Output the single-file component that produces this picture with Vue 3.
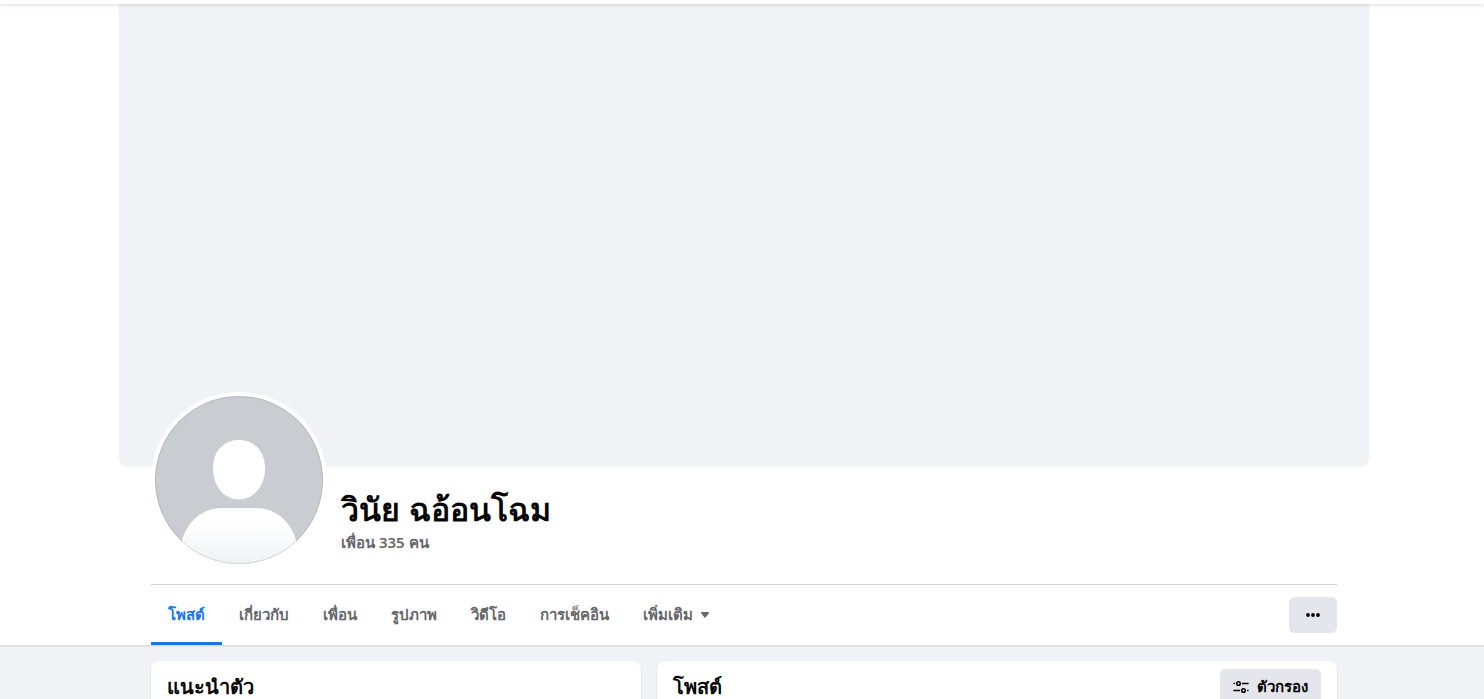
<script setup>
const tabs = ['โพสต์', 'เกี่ยวกับ', 'เพื่อน', 'รูปภาพ', 'วิดีโอ', 'การเช็คอิน']
</script>

<template>
  <div class="page">
    <div class="topbar"></div>
    <header class="profile">
      <div class="cover"></div>
      <div class="content">
        <div class="identity">
          <svg class="avatar" viewBox="0 0 176 176" role="img" aria-label="วินัย ฉอ้อนโฉม">
            <defs>
              <linearGradient id="shoulders" x1="0" y1="0" x2="0" y2="1">
                <stop offset="0.3" stop-color="#fff" />
                <stop offset="1" stop-color="#eff1f4" />
              </linearGradient>
              <clipPath id="disc"><circle cx="88" cy="88" r="84" /></clipPath>
            </defs>
            <circle cx="88" cy="88" r="88" fill="#fff" />
            <g clip-path="url(#disc)">
              <rect width="176" height="176" fill="#c9ccd1" />
              <path d="M88 48C104 48 114 60 114 76C114 94 103 107.500 88 107.500S62 94 62 76C62 60 72 48 88 48Z" fill="#fff" />
              <path d="M30 172V154C33 132 50 116 71 116H105C126 116 143 132 146 154V172Z" fill="url(#shoulders)" />
            </g>
            <circle cx="88" cy="88" r="83.500" fill="none" stroke="#000" stroke-opacity="0.1" />
          </svg>
          <div class="names">
            <h1>วินัย ฉอ้อนโฉม</h1>
            <a class="friends" href="#">เพื่อน 335 คน</a>
          </div>
        </div>
        <div class="navbar">
          <nav class="tabs">
            <a v-for="(tab, i) in tabs" :key="tab" href="#" class="tab" :class="{ active: i === 0 }">{{ tab }}</a>
            <button class="tab" type="button">
              เพิ่มเติม
              <svg class="caret" viewBox="0 0 8 6" aria-hidden="true"><path d="M0.800 0H7.200C8 0 8.200 0.800 7.700 1.400L4.700 5.300C4.300 5.900 3.700 5.900 3.300 5.300L0.300 1.400C-0.200 0.800 0 0 0.800 0Z" fill="currentColor" /></svg>
            </button>
          </nav>
          <button class="more" type="button" aria-label="เพิ่มเติม">
            <svg viewBox="0 0 16 16" aria-hidden="true"><g fill="#050505"><circle cx="3" cy="8" r="1.900" /><circle cx="8" cy="8" r="1.900" /><circle cx="13" cy="8" r="1.900" /></g></svg>
          </button>
        </div>
      </div>
    </header>
    <main class="content columns">
      <section class="card intro"><h2>แนะนำตัว</h2></section>
      <section class="card posts">
        <h2>โพสต์</h2>
        <button class="filter" type="button">
          <svg viewBox="0 0 16 16" aria-hidden="true">
            <g fill="none" stroke="#050505" stroke-width="1.500" stroke-linecap="round">
              <circle cx="5.500" cy="4.500" r="1.800" /><path d="M9.500 4.500H15M1 4.500H1.300" />
              <circle cx="10.500" cy="11.500" r="1.800" /><path d="M1 11.500H6.500M14.700 11.500H15" />
            </g>
          </svg>
          ตัวกรอง
        </button>
      </section>
    </main>
  </div>
</template>

<style>
body {
  margin: 0;
  background: #f0f2f5;
}
</style>

<style scoped>
.page {
  height: 100vh;
  overflow: hidden;
  font-family: "Liberation Sans", sans-serif;
  color: #050505;
  background: #f0f2f5;
}
.topbar {
  position: relative;
  height: 4px;
  background: #fff;
  box-shadow: 0 1px 4px rgba(0, 0, 0, 0.15);
}
.profile {
  padding-left: 4px;
  background: #fff;
  box-shadow: 0 1px 2px rgba(0, 0, 0, 0.15);
}
.cover {
  max-width: 1250px;
  height: 463px;
  margin: 0 auto;
  border-radius: 0 0 8px 8px;
  background: #f0f2f5;
}
.content {
  max-width: 1186px;
  margin: 0 auto;
}
.identity {
  display: flex;
  align-items: flex-end;
  gap: 14px;
  margin-top: -75px;
  padding-bottom: 16px;
  border-bottom: 1px solid #ced0d4;
}
.avatar {
  position: relative;
  flex: none;
  width: 176px;
  height: 176px;
}
.names {
  display: flex;
  flex-direction: column;
  padding-bottom: 14px;
}
h1 {
  margin: 0;
  font-size: 32px;
  line-height: 40px;
  color: #050505;
}
.friends {
  font-family: "Noto Sans", sans-serif;
  font-size: 15px;
  font-weight: 600;
  line-height: 24px;
  color: #65676b;
  text-decoration: none;
}
.navbar {
  display: flex;
  align-items: center;
  justify-content: space-between;
}
.tabs {
  display: flex;
}
.tab {
  display: flex;
  align-items: center;
  gap: 8px;
  box-sizing: border-box;
  height: 60px;
  padding: 3px 17px 0;
  border: 0;
  border-bottom: 3px solid transparent;
  background: none;
  color: #65676b;
  font-family: inherit;
  font-size: 15px;
  font-weight: 700;
  text-decoration: none;
}
.active {
  color: #1876f2;
  border-bottom-color: #1b74e4;
}
.caret {
  width: 8px;
  height: 6px;
}
.more {
  display: grid;
  place-items: center;
  width: 48px;
  height: 36px;
  padding: 0;
  border: 0;
  border-radius: 6px;
  background: #e4e6eb;
}
.more svg,
.filter svg {
  width: 16px;
  height: 16px;
}
.columns {
  display: grid;
  grid-template-columns: 49fr 68fr;
  gap: 16px;
  padding: 16px 0 0 4px;
}
.card {
  display: flex;
  align-items: flex-start;
  justify-content: space-between;
  min-height: 60px;
  padding: 8px 16px;
  border-radius: 8px;
  background: #fff;
  box-shadow: 0 1px 2px rgba(0, 0, 0, 0.15);
}
h2 {
  margin: 0;
  font-size: 20px;
  line-height: 36px;
}
.filter {
  display: flex;
  align-items: center;
  gap: 8px;
  height: 36px;
  padding: 0 13px;
  border: 0;
  border-radius: 6px;
  background: #e4e6eb;
  color: #050505;
  font-family: inherit;
  font-size: 15px;
  font-weight: 700;
}
</style>
